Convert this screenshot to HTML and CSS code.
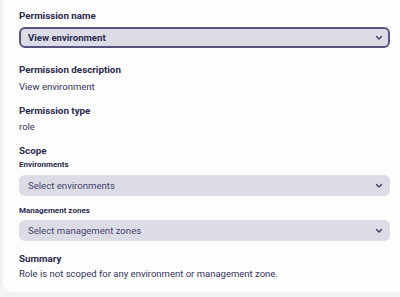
FILE: index.html
```html
<!DOCTYPE html>
<html>
<head>
<meta charset="utf-8">
<link rel="stylesheet" href="styles.css">
</head>
<body>
<div class="card">
  <div class="label">Permission name</div>
  <div class="select active">
    <span class="select-text bold">View environment</span>
    <svg class="chev" width="8" height="6" viewBox="0 0 8 6"><path d="M1.5 1.5 L4 4 L6.5 1.5" fill="none" stroke="#3b3c63" stroke-width="1.4" stroke-linecap="round" stroke-linejoin="round"/></svg>
  </div>
  <div class="label gap-lg">Permission description</div>
  <div class="value v-desc">View environment</div>
  <div class="label gap-md">Permission type</div>
  <div class="value v-type">role</div>
  <div class="label gap-md">Scope</div>
  <div class="sublabel">Environments</div>
  <div class="select s-env">
    <span class="select-text">Select environments</span>
    <svg class="chev" width="8" height="6" viewBox="0 0 8 6"><path d="M1.5 1.5 L4 4 L6.5 1.5" fill="none" stroke="#3b3c63" stroke-width="1.4" stroke-linecap="round" stroke-linejoin="round"/></svg>
  </div>
  <div class="sublabel mz">Management zones</div>
  <div class="select s-mz">
    <span class="select-text">Select management zones</span>
    <svg class="chev" width="8" height="6" viewBox="0 0 8 6"><path d="M1.5 1.5 L4 4 L6.5 1.5" fill="none" stroke="#3b3c63" stroke-width="1.4" stroke-linecap="round" stroke-linejoin="round"/></svg>
  </div>
  <div class="label summary">Summary</div>
  <div class="value">Role is not scoped for any environment or management zone.</div>
</div>
</body>
</html>
```
FILE: styles.css
```css
html, body {
  margin: 0;
  padding: 0;
  background: #f3f3f6;
  height: 297px;
  overflow: hidden;
}
body {
  font-family: Roboto, "Noto Sans", sans-serif;
  color: #2b2c4e;
}
.card {
  margin-left: 3px;
  background: #fdfdfd;
  border-bottom-left-radius: 10px;
  padding: 8px 10px 11px 16px;
}
.label {
  font-size: 9.8px;
  font-weight: 700;
  line-height: 16px;
}
.gap-lg { margin-top: 14px; }
.gap-md { margin-top: 9px; }
.summary { margin-top: 10px; }
.value {
  font-size: 9.5px;
  line-height: 14px;
  color: #33345a;
}
.v-desc { margin-top: 2px; }
.v-type { margin-top: 1px; }
.sublabel {
  font-size: 8px;
  font-weight: 700;
  line-height: 12px;
}
.sublabel.mz {
  margin-top: 9px;
}
.select {
  display: flex;
  align-items: center;
  justify-content: space-between;
  height: 21px;
  box-sizing: border-box;
  background: #dcdce7;
  border-radius: 6px;
  padding: 0 7px 0 9px;
  font-size: 9.6px;
}
.select.active {
  border: 2px solid #55557f;
  padding-left: 7px;
  padding-right: 5px;
  margin-top: 3px;
}
.s-env { margin-top: 4px; }
.s-mz { margin-top: 3px; }
.select-text {
  color: #45466c;
}
.select-text.bold {
  font-weight: 700;
  color: #2b2c4e;
}
.chev {
  display: block;
}
```
